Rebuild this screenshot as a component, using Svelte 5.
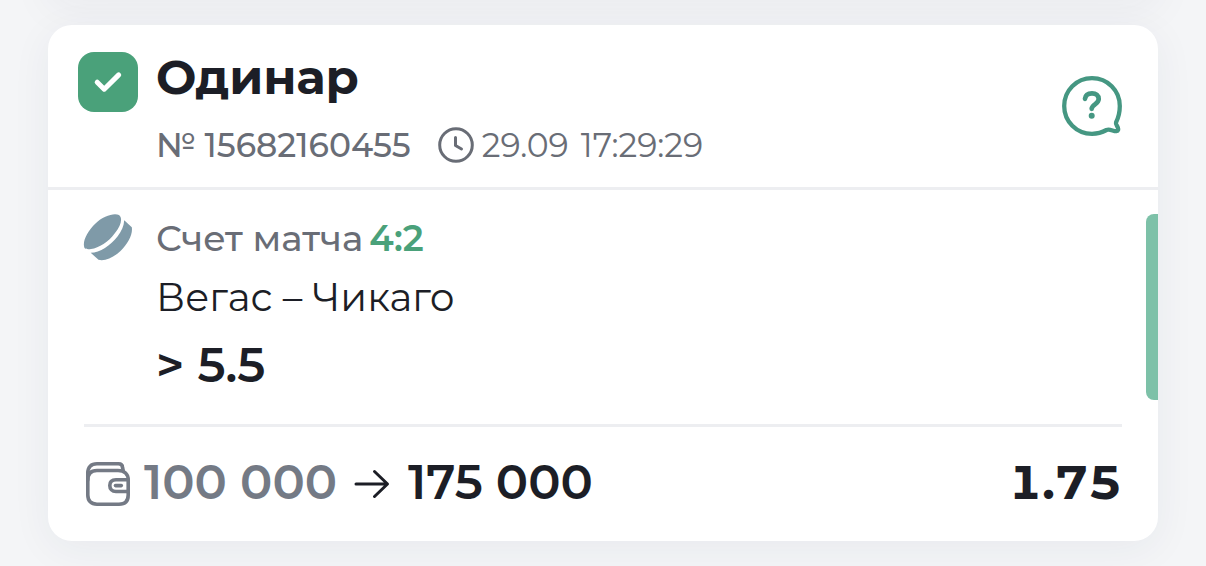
<script>
  const bet = {
    type: "Одинар",
    number: "15682160455",
    date: "29.09",
    time: "17:29:29",
    score: "4:2",
    teams: "Вегас – Чикаго",
    outcome: "> 5.5",
    stake: 100000,
    payout: 175000,
    odds: "1.75",
  };

  const formatSum = (sum) =>
    String(sum).replace(/\B(?=(\d{3})+$)/g, "\u00a0");
</script>

<main class="history">
  <article class="card">
    <header class="card-header">
      <span class="status">
        <svg viewBox="0 0 60 60" fill="none" aria-hidden="true">
          <path d="M19.2 30.2L26.2 37.2L40.7 22.9" />
        </svg>
      </span>
      <div class="heading">
        <h2>{bet.type}</h2>
        <div class="meta">
          <span class="number">№ {bet.number}</span>
          <svg class="clock" viewBox="0 0 36 36" fill="none" aria-hidden="true">
            <circle cx="18" cy="18" r="16.3" />
            <path d="M17.5 10.5V18.5L23.5 22" />
          </svg>
          <time class="date"><span>{bet.date}</span><span>{bet.time}</span></time>
        </div>
      </div>
      <button class="help" type="button" aria-label="Помощь">
        <svg viewBox="0 0 60 60" fill="none" aria-hidden="true">
          <path
            d="M54 46.5C56.5 41.5 57.8 36 57.8 30C57.8 14.5 45.5 2.2 30 2.2C14.5 2.2 2.2 14.5 2.2 30C2.2 45.5 14.5 57.8 30 57.8C35.5 57.8 40 56.5 44.5 54C48 52.7 51.5 55.5 54.500 55.2C56.3 55 56.500 53.5 55.8 51.500C55 49.5 53.500 48 54 46.500Z"
            stroke-width="4.300"
          />
          <path
            d="M23 22.800C23.400 19.200 26 17.300 30 17.300C34 17.300 36.700 19.500 36.700 23C36.700 28 29.700 28.500 29.700 32.800"
            stroke-width="4.700"
          />
          <circle class="dot" cx="29.700" cy="39.700" r="3" />
        </svg>
      </button>
    </header>

    <section class="event">
      <svg class="puck" viewBox="0 0 50 48" aria-hidden="true">
        <path
          d="M1.500 34C-1 28 4 17.500 12.500 9.500C20 2 31 -1.500 36 1C40 4 38 11.500 32 19C25.500 28 16 34 8 35C5 35.400 2.600 35.200 1.500 34Z"
        />
        <path
          d="M7.700 38.800C17 38.500 27.500 31.500 34.500 22.500C38.500 17.300 41 12 41.200 6.300L48.800 13.300C50 20 45 29.500 37.500 37C30.500 43.500 22 47.500 15.500 45.800Z"
        />
      </svg>
      <div class="details">
        <p class="score">Счет матча <b>{bet.score}</b></p>
        <p class="teams">{bet.teams}</p>
        <p class="outcome">{bet.outcome}</p>
      </div>
      <span class="marker"></span>
    </section>

    <footer class="totals">
      <svg class="wallet" viewBox="0 0 44 44" fill="none" aria-hidden="true">
        <path
          d="M1.800 18C1.800 12 5 8.500 11 8.500H32C38.500 8.500 42.200 12 42.200 18V33C42.200 39 39 42.200 33 42.200H11C5 42.200 1.800 39 1.800 33Z"
        />
        <path d="M1.800 18V11C1.800 5 5 1.800 11 1.800H32.500C35.500 1.800 36.500 3.500 36.500 5.500L37.200 8.500" />
        <path d="M42 17.800H30C26 17.800 23.800 20 23.800 23.500C23.800 27 26 29.500 30 29.500H42" />
        <path d="M29.500 23.600H35.300" />
      </svg>
      <span class="stake">{formatSum(bet.stake)}</span>
      <svg class="arrow" viewBox="0 0 36 30" fill="none" aria-hidden="true">
        <path d="M2 15H33M20.500 2.500L33.500 15L20.500 27.500" />
      </svg>
      <span class="payout">{formatSum(bet.payout)}</span>
      <span class="odds">{bet.odds}</span>
    </footer>
  </article>
</main>

<style>
  :global(body) {
    margin: 0;
    background: #f4f5f7;
  }

  .history {
    position: relative;
    overflow: hidden;
    padding: 25px 48px;
    color: #1c1e26;
    font-family: Montserrat, Inter, "Open Sans", sans-serif;
  }

  /* shadow of the card scrolled out above */
  .history::before {
    content: "";
    position: absolute;
    right: 48px;
    bottom: 100%;
    left: 48px;
    height: 200px;
    box-shadow: 0 8px 40px 0 rgba(40, 45, 80, 0.05);
  }

  .card {
    position: relative;
    overflow: hidden;
    border-radius: 24px;
    background: #fff;
    box-shadow: 0 8px 40px 0 rgba(40, 45, 80, 0.06);
  }

  .card-header {
    display: flex;
    align-items: flex-start;
    padding: 27px 36px 23px 30px;
    border-bottom: 3px solid #edeef1;
  }

  .status {
    width: 60px;
    height: 60px;
    margin-right: 18px;
    border-radius: 16px;
    background: #4aa17a;
  }

  .status svg {
    display: block;
    stroke: #fff;
    stroke-width: 5;
    stroke-linecap: round;
    stroke-linejoin: round;
  }

  .heading {
    flex: 1;
  }

  h2 {
    margin: 0 0 24px;
    font-size: 48px;
    font-weight: 700;
    line-height: 50px;
  }

  .meta {
    display: flex;
    align-items: center;
    color: #696d76;
    font-size: 33px;
    line-height: 38px;
  }

  .number {
    font-weight: 500;
  }

  .clock {
    width: 36px;
    height: 36px;
    margin: 0 8px 0 27px;
    stroke: #696d76;
    stroke-width: 3;
    stroke-linecap: round;
    stroke-linejoin: round;
  }

  .date {
    display: flex;
    gap: 12px;
  }

  .help {
    width: 60px;
    height: 60px;
    margin-top: 24px;
    padding: 0;
    border: 0;
    background: none;
    cursor: pointer;
  }

  .help svg {
    display: block;
    stroke: #459782;
    stroke-linecap: round;
    stroke-linejoin: round;
  }

  .help .dot {
    fill: #459782;
    stroke: none;
  }

  .event {
    display: flex;
    padding: 24px 0 24px 35px;
  }

  .puck {
    width: 50px;
    height: 48px;
    margin-right: 23px;
    fill: #7f9aa8;
  }

  .details {
    flex: 1;
    padding-bottom: 2px;
  }

  .details p {
    margin: 0;
  }

  .details .score {
    display: flex;
    gap: 6px;
    color: #696d76;
    font-size: 36px;
    font-weight: 500;
    line-height: 48px;
  }

  .score b {
    color: #4aa17a;
    font-weight: 600;
  }

  .teams {
    font-size: 39px;
    line-height: 70px;
  }

  .outcome {
    font-size: 48px;
    font-weight: 600;
    line-height: 66px;
  }

  .marker {
    width: 12px;
    border-radius: 8px 0 0 8px;
    background: #7dc1a8;
  }

  .totals {
    display: flex;
    align-items: center;
    margin: 0 36px;
    padding: 27px 0;
    border-top: 3px solid #edeef1;
    font-size: 48px;
    font-weight: 600;
    line-height: 56px;
  }

  .totals span {
    padding-bottom: 4px;
  }

  .wallet {
    width: 44px;
    height: 44px;
    margin: 0 14px 0 2px;
    stroke: #747a85;
    stroke-width: 3.6;
    stroke-linecap: round;
    stroke-linejoin: round;
  }

  .stake {
    color: #747a85;
  }

  .arrow {
    width: 36px;
    height: 30px;
    margin: 0 18px 0 17px;
    stroke: #1c1e26;
    stroke-width: 3;
    stroke-linecap: round;
    stroke-linejoin: round;
  }

  .odds {
    margin-left: auto;
    font-weight: 700;
    font-variant-numeric: tabular-nums;
  }
</style>
